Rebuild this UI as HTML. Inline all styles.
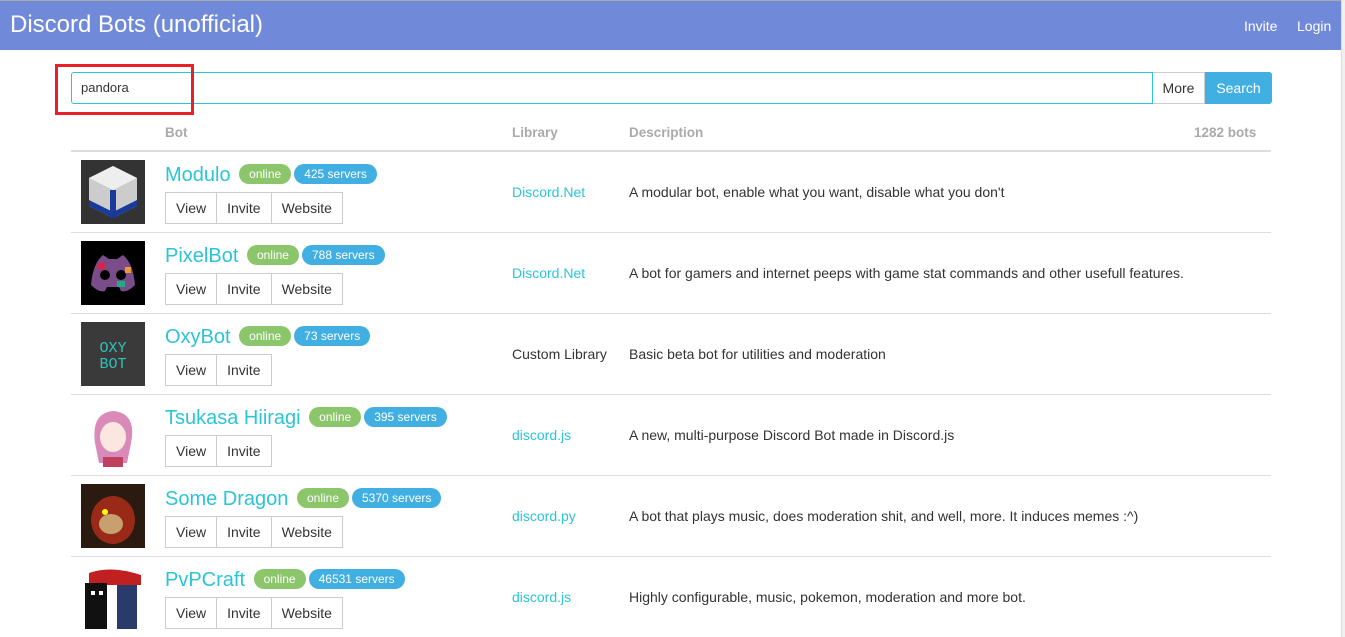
<!DOCTYPE html>
<html><head><style>
body{margin:0;font-family:"Liberation Sans",sans-serif;background:#fff;width:1345px;height:637px;overflow:hidden;position:relative;color:#333;font-size:13px}
.top{position:absolute;left:0;top:0;width:1342px;height:1px;background:#aaa}
.nav{position:absolute;left:0;top:1px;width:1342px;height:49px;background:#7089d9;color:#fff}
.nav .brand{position:absolute;left:10px;top:10px;font-size:24px}
.nav .l{position:absolute;top:17px;font-size:14px}
.sb{position:absolute;right:0;top:0;width:3px;height:637px;background:#f0f0f0;border-left:1px solid #ddd}
.in{position:absolute;left:71px;top:72px;border:1px solid #2bc4d8;border-radius:3px 0 0 3px;font-size:13px;line-height:30px;padding-left:9px;box-sizing:border-box;width:1082px;height:32px}
.more{position:absolute;left:1153px;top:72px;width:52px;height:32px;border:1px solid #ccc;border-left:none;box-sizing:border-box;text-align:center;line-height:30px;font-size:14px}
.srch{position:absolute;left:1205px;top:72px;width:67px;height:32px;background:#42afe3;color:#fff;border-radius:0 3px 3px 0;text-align:center;line-height:32px;font-size:14px}
.red{position:absolute;left:55px;top:64px;width:133px;height:45px;border:3px solid #e8202a}
.th{position:absolute;top:125px;font-weight:bold;color:#aaa;font-size:13.5px}
.hl{position:absolute;left:71px;width:1200px;height:1px;background:#ddd}
.row{position:absolute;left:71px;width:1200px;height:81px}
.img{position:absolute;left:10px;top:9px;width:64px;height:64px}
.nm{position:absolute;left:94px;top:13px;font-size:20px;color:#2bc4d8;white-space:nowrap}
.b{display:inline-block;font-size:12px;color:#fff;border-radius:12px;padding:3px 10px;vertical-align:3px;margin-left:3px}
.on{background:#8cc66b}.sv{background:#42afe3}
.btns{position:absolute;left:95px;top:41px;display:flex}
.btns span{border:1px solid #ccc;height:30px;line-height:30px;padding:0 10px;font-size:14px;margin-left:-1px}
.lib{position:absolute;left:441px;top:33px;font-size:14px;color:#2bc4d8}
.ds{position:absolute;left:558px;top:33px;font-size:14px}
</style></head><body>
<div class="top"></div>
<div class="nav"><div class="brand">Discord Bots (unofficial)</div><div class="l" style="left:1244px">Invite</div><div class="l" style="left:1297px">Login</div></div>
<div class="sb"></div>
<div class="in">pandora</div><div class="more">More</div><div class="srch">Search</div>
<div class="red"></div>
<div class="th" style="left:165px">Bot</div><div class="th" style="left:512px">Library</div><div class="th" style="left:629px">Description</div><div class="th" style="left:1194px">1282 bots</div>
<div class="hl" style="top:150px;height:2px"></div>

<div class="row" style="top:151px">
<svg class="img" viewBox="0 0 64 64"><rect width="64" height="64" fill="#333"/><polygon points="32,6 56,18 56,46 32,58 8,46 8,18" fill="#ccc"/><polygon points="32,6 56,18 32,30 8,18" fill="#eee"/><polygon points="8,46 32,58 56,46 56,40 32,52 8,40" fill="#1a3a9a"/><rect x="29" y="30" width="6" height="28" fill="#1a3a9a"/></svg>
<div class="nm">Modulo <span class="b on">online</span><span class="b sv">425 servers</span></div>
<div class="btns"><span>View</span><span>Invite</span><span>Website</span></div>
<div class="lib">Discord.Net</div><div class="ds">A modular bot, enable what you want, disable what you don't</div></div>
<div class="hl" style="top:232px"></div>

<div class="row" style="top:232px">
<svg class="img" viewBox="0 0 64 64"><rect width="64" height="64" fill="#000"/><path d="M10 44 Q12 22 22 14 L28 18 H36 L42 14 Q52 22 54 44 Q46 52 40 50 L38 46 H26 L24 50 Q18 52 10 44Z" fill="#7a4c8a"/><circle cx="24" cy="34" r="5" fill="#000"/><circle cx="40" cy="34" r="5" fill="#000"/><rect x="16" y="22" width="8" height="6" fill="#d24"/><rect x="36" y="40" width="8" height="6" fill="#2a8"/><rect x="44" y="26" width="6" height="6" fill="#e93"/></svg>
<div class="nm">PixelBot <span class="b on">online</span><span class="b sv">788 servers</span></div>
<div class="btns"><span>View</span><span>Invite</span><span>Website</span></div>
<div class="lib">Discord.Net</div><div class="ds">A bot for gamers and internet peeps with game stat commands and other usefull features.</div></div>
<div class="hl" style="top:313px"></div>

<div class="row" style="top:313px">
<svg class="img" viewBox="0 0 64 64"><rect width="64" height="64" fill="#3a3a3a"/><text x="32" y="30" font-family="Liberation Mono" font-size="15" fill="#2bc4b8" text-anchor="middle">OXY</text><text x="32" y="46" font-family="Liberation Mono" font-size="15" fill="#2bc4b8" text-anchor="middle">BOT</text></svg>
<div class="nm">OxyBot <span class="b on">online</span><span class="b sv">73 servers</span></div>
<div class="btns"><span>View</span><span>Invite</span></div>
<div class="lib" style="color:#333">Custom Library</div><div class="ds">Basic beta bot for utilities and moderation</div></div>
<div class="hl" style="top:394px"></div>

<div class="row" style="top:394px">
<svg class="img" viewBox="0 0 64 64"><rect width="64" height="64" fill="#fff"/><path d="M14 40 Q10 10 32 8 Q56 10 50 40 L46 60 H18Z" fill="#d98ab8"/><ellipse cx="32" cy="34" rx="13" ry="15" fill="#fbe6e0"/><rect x="22" y="54" width="20" height="10" fill="#c04060"/></svg>
<div class="nm">Tsukasa Hiiragi <span class="b on">online</span><span class="b sv">395 servers</span></div>
<div class="btns"><span>View</span><span>Invite</span></div>
<div class="lib">discord.js</div><div class="ds">A new, multi-purpose Discord Bot made in Discord.js</div></div>
<div class="hl" style="top:475px"></div>

<div class="row" style="top:475px">
<svg class="img" viewBox="0 0 64 64"><rect width="64" height="64" fill="#2a1a10"/><ellipse cx="32" cy="36" rx="22" ry="24" fill="#9a2a18"/><ellipse cx="30" cy="40" rx="12" ry="10" fill="#c8a070"/><circle cx="24" cy="28" r="3" fill="#ff0"/></svg>
<div class="nm">Some Dragon <span class="b on">online</span><span class="b sv">5370 servers</span></div>
<div class="btns"><span>View</span><span>Invite</span><span>Website</span></div>
<div class="lib">discord.py</div><div class="ds">A bot that plays music, does moderation shit, and well, more. It induces memes :^)</div></div>
<div class="hl" style="top:556px"></div>

<div class="row" style="top:556px">
<svg class="img" viewBox="0 0 64 64"><rect width="64" height="64" fill="#fff"/><path d="M8 8 Q30 0 60 10 V20 H8Z" fill="#c02020"/><rect x="4" y="18" width="22" height="46" fill="#111"/><rect x="36" y="20" width="20" height="44" fill="#2a3a6a"/><rect x="10" y="26" width="4" height="4" fill="#fff"/><rect x="18" y="26" width="4" height="4" fill="#fff"/></svg>
<div class="nm">PvPCraft <span class="b on">online</span><span class="b sv">46531 servers</span></div>
<div class="btns"><span>View</span><span>Invite</span><span>Website</span></div>
<div class="lib">discord.js</div><div class="ds">Highly configurable, music, pokemon, moderation and more bot.</div></div>
</body></html>
